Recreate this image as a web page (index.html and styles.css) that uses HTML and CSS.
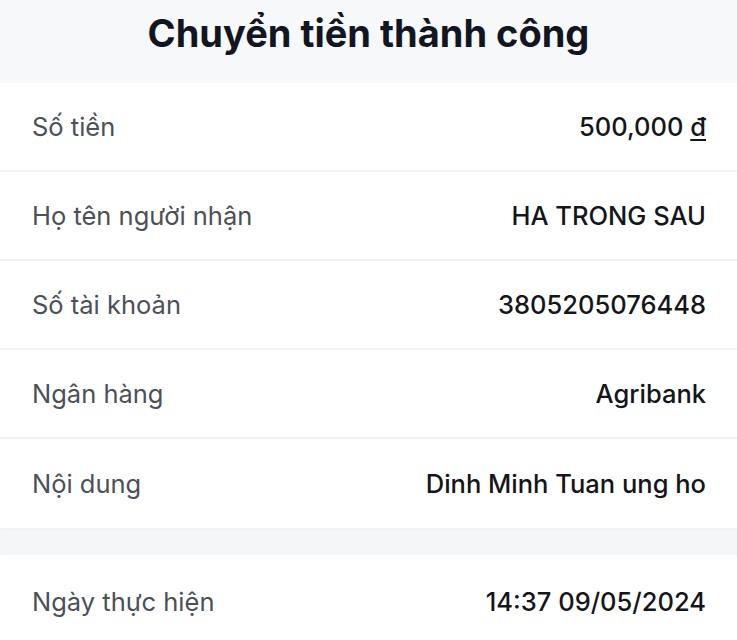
FILE: index.html
```html
<!DOCTYPE html>
<html lang="vi">
<head>
<meta charset="utf-8">
<link rel="stylesheet" href="styles.css">
</head>
<body>
<div class="page">
  <header class="head"><h1 class="title">Chuyển tiền thành công</h1></header>
  <section class="card">
    <div class="row"><span class="label">Số tiền</span><span class="value">500,000 <span class="cur">đ</span></span></div>
    <div class="row"><span class="label">Họ tên người nhận</span><span class="value">HA TRONG SAU</span></div>
    <div class="row"><span class="label">Số tài khoản</span><span class="value">3805205076448</span></div>
    <div class="row"><span class="label">Ngân hàng</span><span class="value">Agribank</span></div>
    <div class="row last"><span class="label">Nội dung</span><span class="value">Dinh Minh Tuan ung ho</span></div>
  </section>
  <div class="gap"></div>
  <section class="card">
    <div class="row last"><span class="label">Ngày thực hiện</span><span class="value">14:37 09/05/2024</span></div>
  </section>
</div>
</body>
</html>
```
FILE: styles.css
```css
html, body { margin: 0; padding: 0; }
body { background: #f6f7f9; font-family: Inter, "Noto Sans", sans-serif; overflow: hidden; }
.page { width: 737px; display: flex; flex-direction: column; }
.head { height: 83px; background: #f7f8fa; display: flex; align-items: center; justify-content: center; }
.title { margin: 0; font-size: 38px; font-weight: 700; color: #111622; letter-spacing: 0; padding-bottom: 17px; }
.card { background: #fff; }
.row { height: 89px; padding: 0 31px 0 32px; display: flex; align-items: center; justify-content: space-between; border-bottom: 2px solid #f1f2f4; box-sizing: border-box; }
.row.last { border-bottom: none; }
.label { font-size: 25.5px; color: #4b5059; font-weight: 400; }
.value { font-size: 25.5px; color: #14161b; font-weight: 500; }
.cur { text-decoration: underline; text-underline-offset: 3px; }
.gap { height: 27px; background: #f5f6f8; box-shadow: inset 0 3px 4px -2px rgba(0,0,0,0.04); }
.card:last-child .row { height: 92px; }
```
